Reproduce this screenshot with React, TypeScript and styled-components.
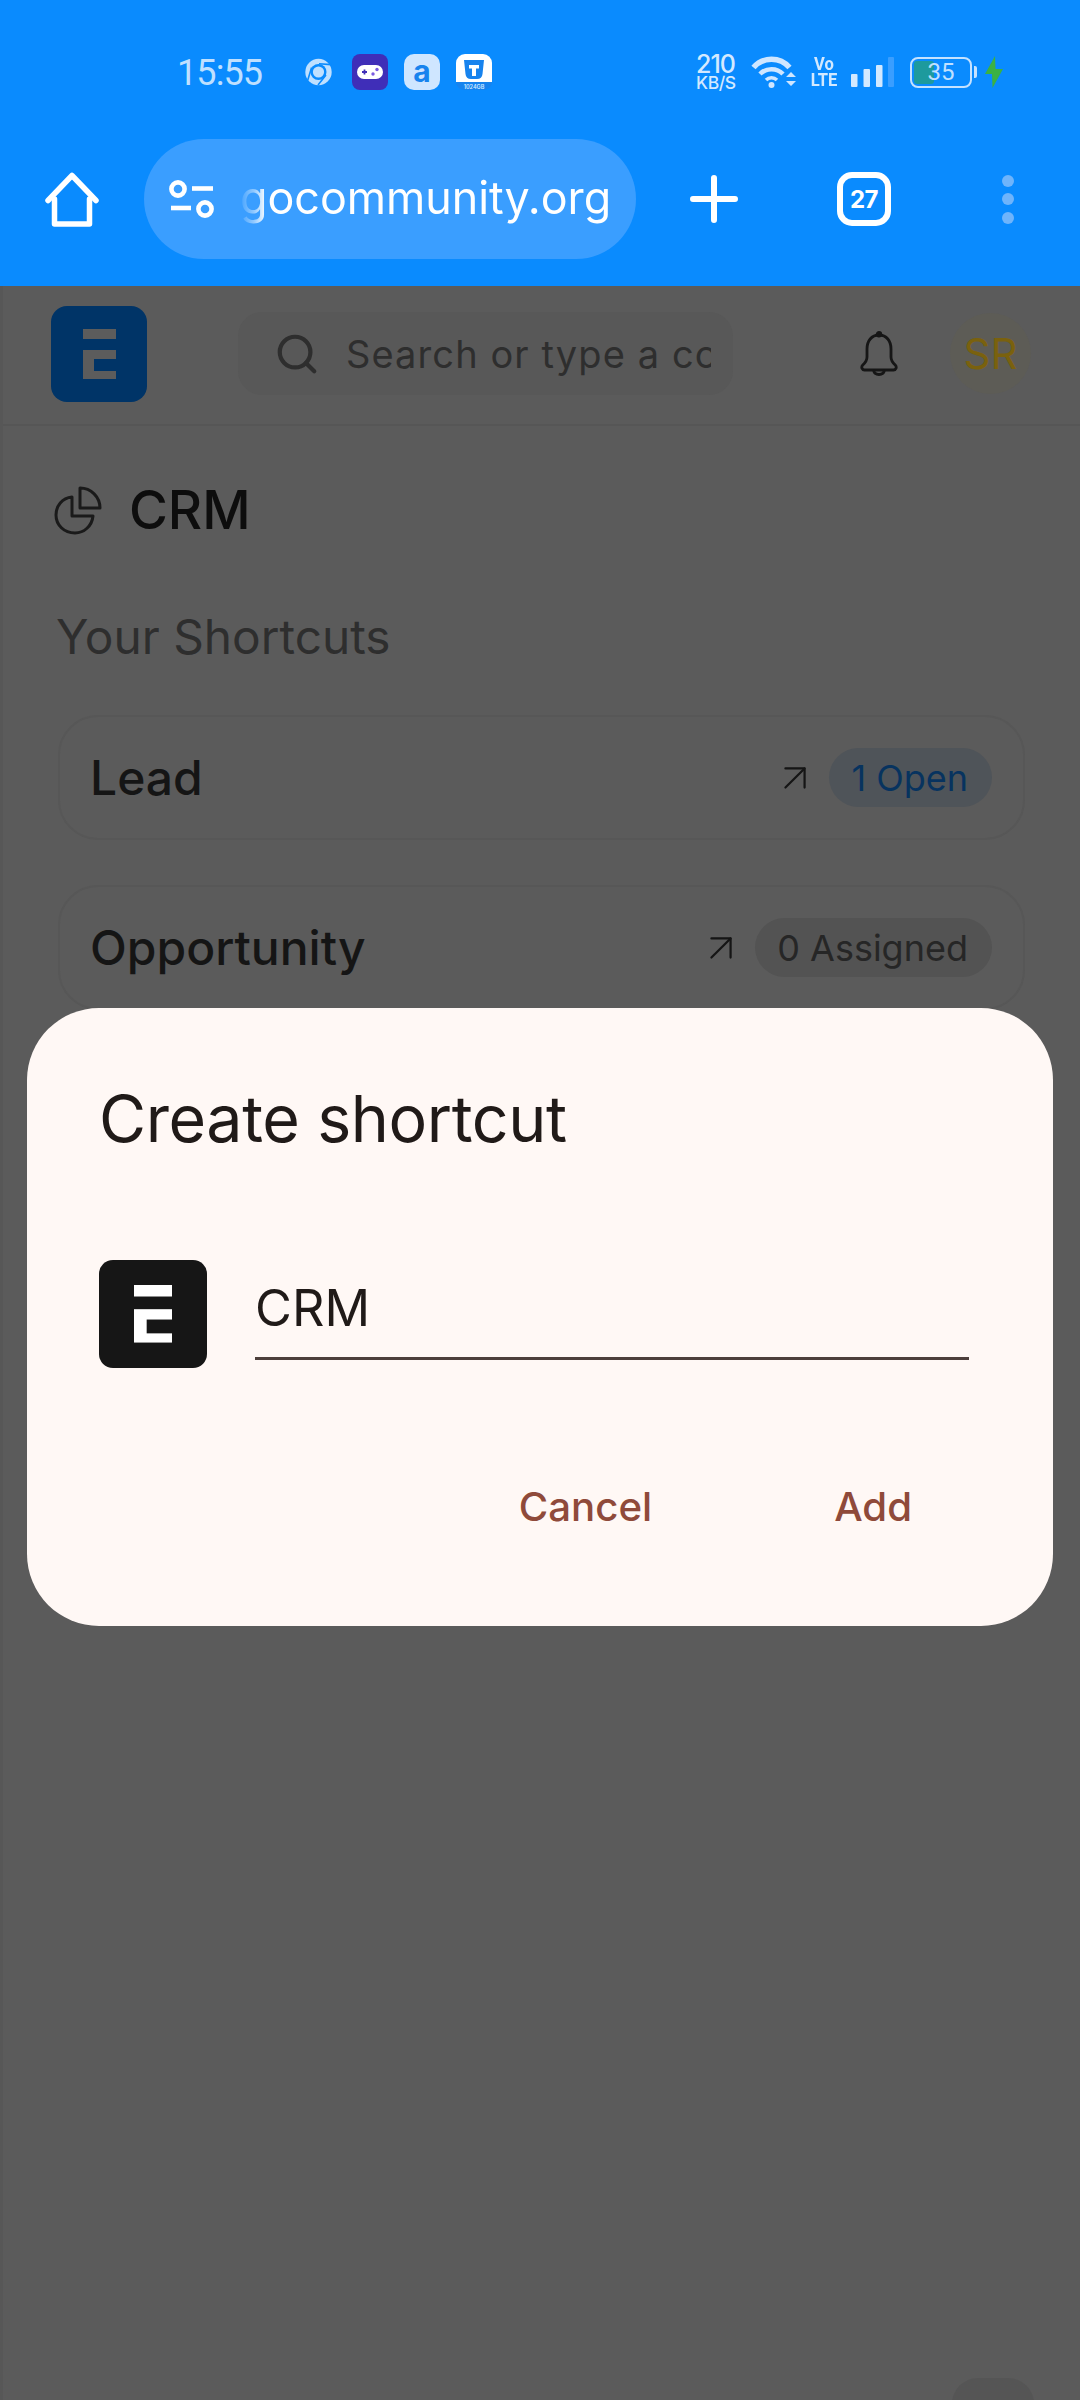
import React from "react";
import styled, { createGlobalStyle } from "styled-components";
import { Search, ArrowUpRight } from "lucide-react";

const Global = createGlobalStyle`
  html, body { margin: 0; padding: 0; background: #5b5b5b; }
  body { font-family: "Inter", "Liberation Sans", sans-serif; }
  * { box-sizing: border-box; }
`;

const Screen = styled.div`
  position: relative;
  width: 1080px;
  height: 2400px;
  overflow: hidden;
  display: flex;
  flex-direction: column;
  background: #5b5b5b;
`;

/* ---------- browser chrome ---------- */
const Chrome = styled.header`
  height: 286px;
  background: #0a8bfe;
  flex: none;
`;

const StatusBar = styled.div`
  height: 139px;
  padding: 54px 0 49px 177px;
  display: flex;
  align-items: center;
  color: #bfe0ff;
`;

const Time = styled.span`
  font-family: "Roboto", sans-serif;
  font-size: 36px;
  line-height: 38px;
  letter-spacing: -0.9px;
  padding-top: 2px;
  width: 128px;
  flex: none;
`;

const NotifIcons = styled.div`
  display: flex;
  align-items: center;
  gap: 16px;
  width: 391px;
  flex: none;
`;

const TraySvg = styled.svg`
  display: block;
  flex: none;
`;

const NetSpeed = styled.div`
  width: 55px;
  flex: none;
  font-family: "Inter", sans-serif;
  color: #d3e9ff;
  text-align: left;
  font-weight: 500;
  display: flex;
  flex-direction: column;
`;

const NetValue = styled.span`
  font-size: 25px;
  line-height: 21px;
  letter-spacing: -1px;
`;

const NetUnit = styled.span`
  font-size: 17.5px;
  line-height: 15px;
  letter-spacing: -0.4px;
`;

const SystemIcons = styled.div`
  display: flex;
  align-items: center;
`;

const VoLte = styled.div`
  width: 24px;
  margin: 0 15px 0 16px;
  color: #d3e9ff;
  font-family: "Roboto", sans-serif;
  font-weight: 700;
  display: flex;
  flex-direction: column;
  align-items: center;
  font-size: 18px;
  line-height: 16px;
  transform: scaleX(0.92);
`;

const Battery = styled.div`
  position: relative;
  width: 62px;
  height: 31px;
  margin-left: 16px;
  border: 2.5px solid #c5e2ff;
  border-radius: 8px;
  display: flex;
  align-items: center;
  justify-content: center;
  font-family: "Roboto", sans-serif;
  font-size: 24px;
  color: #bfe0ff;
  overflow: hidden;
`;

const BatteryFill = styled.span`
  position: absolute;
  left: 2px;
  top: 2px;
  bottom: 2px;
  border-radius: 3px;
  background: #1d9a9d;
`;

const BatteryLabel = styled.span`
  position: relative;
  line-height: 26px;
`;

const BatteryNub = styled.span`
  width: 3px;
  height: 12px;
  margin-left: 2px;
  border-radius: 0 2px 2px 0;
  background: #c5e2ff;
  flex: none;
`;

const Toolbar = styled.div`
  height: 147px;
  padding: 0 0 27px 45px;
  display: flex;
  align-items: center;
`;

const UrlPill = styled.div`
  width: 492px;
  height: 120px;
  margin-left: 45px;
  margin-right: 54px;
  padding-left: 25px;
  border-radius: 60px;
  background: #3a9eff;
  display: flex;
  align-items: center;
  flex: none;
`;

const UrlText = styled.span`
  margin-left: 26px;
  padding-bottom: 2px;
  color: #ffffff;
  font-size: 44.8px;
  line-height: 60px;
  white-space: nowrap;
  -webkit-mask-image: linear-gradient(90deg, rgba(0,0,0,0.05) 0, rgba(0,0,0,0.45) 14px, #000 26px);
  mask-image: linear-gradient(90deg, rgba(0,0,0,0.05) 0, rgba(0,0,0,0.45) 14px, #000 26px);
`;

const TabCount = styled.div`
  width: 54px;
  height: 54px;
  margin-left: 99px;
  border: 6px solid #ffffff;
  border-radius: 15px;
  color: #ffffff;
  font-size: 24px;
  font-weight: 700;
  letter-spacing: -0.5px;
  display: flex;
  align-items: center;
  justify-content: center;
  flex: none;
`;

const MenuDots = styled.div`
  margin-left: 111px;
  display: flex;
  flex-direction: column;
  gap: 6.5px;
`;

const MenuDot = styled.span`
  width: 12px;
  height: 12px;
  border-radius: 50%;
  background: #6fb4fb;
`;

/* ---------- dimmed page ---------- */
const Page = styled.main`
  flex: 1;
  border-left: 3px solid #575757;
  display: flex;
  flex-direction: column;
`;

const AppHeader = styled.div`
  height: 140px;
  padding: 0 0 3px 48px;
  border-bottom: 2px solid #565656;
  display: flex;
  align-items: center;
  flex: none;
`;

const Logo = styled.div`
  width: 96px;
  height: 96px;
  border-radius: 16px;
  background: #003467;
  display: flex;
  align-items: center;
  justify-content: center;
  flex: none;
`;

const SearchBox = styled.div`
  width: 495px;
  height: 83px;
  margin-left: 91px;
  padding: 0 22px 0 36px;
  border-radius: 24px;
  background: #585858;
  display: flex;
  align-items: center;
  color: #2e2e2e;
  flex: none;
`;

const SearchText = styled.span`
  margin-left: 26px;
  font-size: 38px;
  letter-spacing: 1.1px;
  white-space: nowrap;
  overflow: hidden;
`;

const BellIcon = styled.svg`
  width: 38px;
  height: 45px;
  margin-left: 127px;
  flex: none;
`;

const Avatar = styled.div`
  width: 81px;
  height: 81px;
  margin-left: 52px;
  border-radius: 50%;
  background: #5d5c56;
  color: #7a610e;
  font-size: 42px;
  display: flex;
  align-items: center;
  justify-content: center;
  flex: none;
`;

const TitleRow = styled.div`
  margin: 57px 0 0 51px;
  display: flex;
  align-items: center;
  gap: 27px;
  height: 54px;
`;

const Title = styled.h1`
  margin: 0;
  color: #0d0d0d;
  font-size: 53px;
  font-weight: 500;
  line-height: 54px;
`;

const SectionLabel = styled.h2`
  margin: 72px 0 0 53px;
  color: #2e2e2e;
  font-size: 47.8px;
  font-weight: 400;
  line-height: 56px;
`;

const CardList = styled.div`
  margin: 50px 0 0 55px;
  width: 967px;
  display: flex;
  flex-direction: column;
  gap: 45px;
`;

const Card = styled.div`
  height: 125px;
  padding: 0 31px 0 30px;
  border: 2px solid #575757;
  border-radius: 40px;
  display: flex;
  align-items: center;
`;

const CardName = styled.span`
  color: #151515;
  font-size: 48px;
  font-weight: 460;
  flex: 1;
`;

const Badge = styled.span<{ $tone: "blue" | "grey" }>`
  height: 59px;
  margin-left: 11px;
  padding: 0 24px 0 22px;
  border-radius: 30px;
  font-size: 36px;
  display: flex;
  align-items: center;
  background: ${(p) => (p.$tone === "blue" ? "#4f5459" : "#535353")};
  color: ${(p) => (p.$tone === "blue" ? "#07335f" : "#262626")};
`;

const Fab = styled.div`
  position: absolute;
  left: 952px;
  top: 2378px;
  width: 82px;
  height: 82px;
  border-radius: 26px;
  background: #555555;
`;

/* ---------- dialog ---------- */
const Dialog = styled.section`
  position: absolute;
  left: 27px;
  top: 1008px;
  width: 1026px;
  height: 618px;
  padding: 71px 72px 0;
  border-radius: 72px;
  background: #fff8f5;
  display: flex;
  flex-direction: column;
`;

const DialogTitle = styled.h3`
  margin: 0;
  color: #201a18;
  font-family: "Inter", sans-serif;
  font-size: 64.5px;
  font-weight: 400;
  letter-spacing: -0.4px;
  line-height: 80px;
`;

const FormRow = styled.div`
  margin-top: 101px;
  display: flex;
  align-items: flex-start;
`;

const ShortcutIcon = styled.div`
  width: 108px;
  height: 108px;
  border-radius: 14px;
  background: #161616;
  display: flex;
  align-items: center;
  justify-content: center;
  flex: none;
`;

const NameField = styled.div`
  width: 714px;
  height: 100px;
  margin-left: 48px;
  border-bottom: 3px solid #4d3f3b;
  color: #201a18;
  font-family: "Inter", sans-serif;
  font-size: 50.5px;
  line-height: 96px;
`;

const Actions = styled.div`
  margin-top: 113px;
  padding-right: 69px;
  display: flex;
  justify-content: flex-end;
  gap: 182px;
`;

const ActionButton = styled.button`
  padding: 0;
  border: 0;
  background: none;
  color: #8f4a3a;
  font-family: "Inter", sans-serif;
  font-size: 40.2px;
  font-weight: 500;
  line-height: 52px;
`;

/* ---------- drawings ---------- */
const LogoMark = ({ size, fg, bg }: { size: number; fg: string; bg: string }) => (
  <svg width={size} height={size * 50 / 33} viewBox="0 0 33 50">
    <rect x="0" y="0" width="33" height="10" fill={fg} />
    <rect x="0" y="21" width="33" height="29" fill={fg} />
    <rect x="11" y="30" width="22" height="12" fill={bg} />
  </svg>
);

const HomeIcon = () => (
  <svg width="54" height="55" viewBox="0 0 54 55" fill="none" stroke="#fff" strokeWidth="5.5" strokeLinecap="round" strokeLinejoin="round">
    <path d="M3 28.5 L27 3.5 L51 28.5" />
    <path d="M9.5 27 V52 H44.5 V27" />
  </svg>
);

const TuneIcon = () => (
  <svg width="45" height="38" viewBox="0 0 45 38" fill="none" stroke="#fff" strokeWidth="4.6">
    <circle cx="9" cy="9" r="6.6" />
    <path d="M23 8.5 H44" />
    <path d="M2 28 H22" />
    <circle cx="36" cy="29" r="6.6" />
  </svg>
);

const PlusIcon = () => (
  <svg width="48" height="48" viewBox="0 0 48 48" stroke="#fff" strokeWidth="6" strokeLinecap="round">
    <path d="M24 3 V45 M3 24 H45" />
  </svg>
);

const ChromeGlyph = () => (
  <TraySvg width="27" height="28" viewBox="0 0 27 28" style={{ marginRight: 4 }}>
    <circle cx="13.5" cy="14" r="13.2" fill="#bfe0ff" />
    <circle cx="13.5" cy="14" r="8" fill="#0a8bfe" />
    <circle cx="13.5" cy="14" r="5.6" fill="#bfe0ff" />
    <path d="M14 5.8 L26 6.6 M6.6 9.5 L2.8 22 M21 17 L13 27" stroke="#0a8bfe" strokeWidth="1.6" fill="none" />
  </TraySvg>
);

const GameGlyph = () => (
  <TraySvg width="36" height="36" viewBox="0 0 36 36">
    <rect width="36" height="36" rx="8" fill="#3f2eb8" />
    <rect x="5" y="11" width="26" height="14" rx="7" fill="#fff" />
    <path d="M10 18 H15 M12.5 15.5 V20.5" stroke="#3f2eb8" strokeWidth="1.8" />
    <circle cx="25" cy="15.5" r="1.7" fill="#7a5be0" />
    <circle cx="21" cy="20" r="1.7" fill="#7a5be0" />
  </TraySvg>
);

const AGlyph = () => (
  <TraySvg width="36" height="36" viewBox="0 0 36 36">
    <rect width="36" height="36" rx="10" fill="#cfe6ff" />
    <text x="18" y="28" textAnchor="middle" fontFamily="Inter, sans-serif" fontSize="30" fontWeight="700" fill="#1783ee">a</text>
  </TraySvg>
);

const TGlyph = () => (
  <TraySvg width="36" height="36" viewBox="0 0 36 36">
    <path d="M9 0 H27 A9 9 0 0 1 36 9 V28 H0 V9 A9 9 0 0 1 9 0 Z" fill="#fff" />
    <path d="M0 28 H36 A9 8 0 0 1 27 36 H9 A9 8 0 0 1 0 28 Z" fill="#1783ee" />
    <path d="M8 6 H28 L26.5 20 Q26 25 21 25 H15 Q10 25 9.5 20 Z" fill="#1783ee" />
    <path d="M13 11 H23 V14.5 H20 V22 H16 V14.5 H13 Z" fill="#fff" />
    <text x="18" y="34.5" textAnchor="middle" fontFamily="Inter, sans-serif" fontSize="5.5" fontWeight="600" fill="#d3e9ff">1024GB</text>
  </TraySvg>
);

const WifiGlyph = () => (
  <TraySvg width="45" height="34" viewBox="0 0 45 34" fill="none" stroke="#cfe6ff" strokeLinecap="butt">
    <path d="M2.5 12.5 C12 1.5 29 1.5 38.5 12.5" strokeWidth="5.5" />
    <path d="M9 19 C15 12.5 26 12.5 32 19" strokeWidth="4.5" />
    <path d="M15 25 C18 22 23 22 26 25" strokeWidth="3.5" />
    <circle cx="20.5" cy="30" r="3" fill="#cfe6ff" stroke="none" />
    <path d="M35 22 L40 17 L45 22 Z M35 26 L40 31 L45 26 Z" fill="#cfe6ff" stroke="none" />
  </TraySvg>
);

const SignalGlyph = () => (
  <TraySvg width="43" height="30" viewBox="0 0 43 30">
    <rect x="0" y="17" width="6.5" height="13" rx="1" fill="#d3e9ff" />
    <rect x="12.5" y="12" width="6.5" height="18" rx="1" fill="#d3e9ff" />
    <rect x="25" y="8" width="6.5" height="22" rx="1" fill="#d3e9ff" />
    <rect x="37" y="0" width="6" height="30" rx="1" fill="#3a9eff" />
  </TraySvg>
);

const BoltGlyph = () => (
  <TraySvg width="18" height="32" viewBox="0 0 18 32" style={{ marginLeft: 8 }}>
    <path d="M10 0 L0 18 H7 L7.5 32 L18 13 H10.5 Z" fill="#3bb143" />
  </TraySvg>
);

const PieIcon = () => (
  <svg width="48" height="49" viewBox="0 0 48 49" fill="none" stroke="#1a1a1a" strokeWidth="3" strokeLinejoin="round">
    <path d="M26 2 C37 2 46 11 46 22 H26 Z" />
    <path d="M18 11 C8 12 2 20 2 29 C2 39 10 47 21 47 C30 47 38 40 39 30 H18 Z" />
  </svg>
);

export default function App() {
  return (
    <Screen>
      <Global />
      <Chrome>
        <StatusBar>
          <Time>15:55</Time>
          <NotifIcons>
            <ChromeGlyph />
            <GameGlyph />
            <AGlyph />
            <TGlyph />
          </NotifIcons>
          <SystemIcons>
            <NetSpeed>
              <NetValue>210</NetValue>
              <NetUnit>KB/S</NetUnit>
            </NetSpeed>
            <WifiGlyph />
            <VoLte>
              <span>Vo</span>
              <span>LTE</span>
            </VoLte>
            <SignalGlyph />
            <Battery>
              <BatteryFill style={{ width: "35%" }} />
              <BatteryLabel>35</BatteryLabel>
            </Battery>
            <BatteryNub />
            <BoltGlyph />
          </SystemIcons>
        </StatusBar>
        <Toolbar>
          <HomeIcon />
          <UrlPill>
            <TuneIcon />
            <UrlText>gocommunity.org</UrlText>
          </UrlPill>
          <PlusIcon />
          <TabCount>27</TabCount>
          <MenuDots>
            <MenuDot />
            <MenuDot />
            <MenuDot />
          </MenuDots>
        </Toolbar>
      </Chrome>

      <Page>
        <AppHeader>
          <Logo>
            <LogoMark size={33} fg="#5c5c5c" bg="#003467" />
          </Logo>
          <SearchBox>
            <Search size={46} strokeWidth={2.2} color="#2e2e2e" style={{ flex: "none" }} />
            <SearchText>Search or type a command</SearchText>
          </SearchBox>
          <BellIcon viewBox="0 0 38 45" fill="none" stroke="#161616" strokeWidth="2.8" strokeLinejoin="round">
            <path d="M19 4 C11.5 4 7 10 7 18 V26 C7 30 5 32 2.8 34 C0.8 36 2 39 4.5 39 H33.5 C36 39 37.2 36 35.2 34 C33 32 31 30 31 26 V18 C31 10 26.5 4 19 4 Z" />
            <circle cx="19" cy="3.2" r="1.8" fill="#161616" />
            <path d="M13.5 39 C14.5 45 23.5 45 24.5 39" />
          </BellIcon>
          <Avatar>SR</Avatar>
        </AppHeader>
        <TitleRow>
          <PieIcon />
          <Title>CRM</Title>
        </TitleRow>
        <SectionLabel>Your Shortcuts</SectionLabel>
        <CardList>
          <Card>
            <CardName>Lead</CardName>
            <ArrowUpRight size={46} strokeWidth={1.15} color="#151515" />
            <Badge $tone="blue">1 Open</Badge>
          </Card>
          <Card>
            <CardName>Opportunity</CardName>
            <ArrowUpRight size={46} strokeWidth={1.15} color="#151515" />
            <Badge $tone="grey">0 Assigned</Badge>
          </Card>
        </CardList>
      </Page>

      <Fab />

      <Dialog>
        <DialogTitle>Create shortcut</DialogTitle>
        <FormRow>
          <ShortcutIcon>
            <LogoMark size={38} fg="#ffffff" bg="#161616" />
          </ShortcutIcon>
          <NameField>CRM</NameField>
        </FormRow>
        <Actions>
          <ActionButton>Cancel</ActionButton>
          <ActionButton>Add</ActionButton>
        </Actions>
      </Dialog>
    </Screen>
  );
}
